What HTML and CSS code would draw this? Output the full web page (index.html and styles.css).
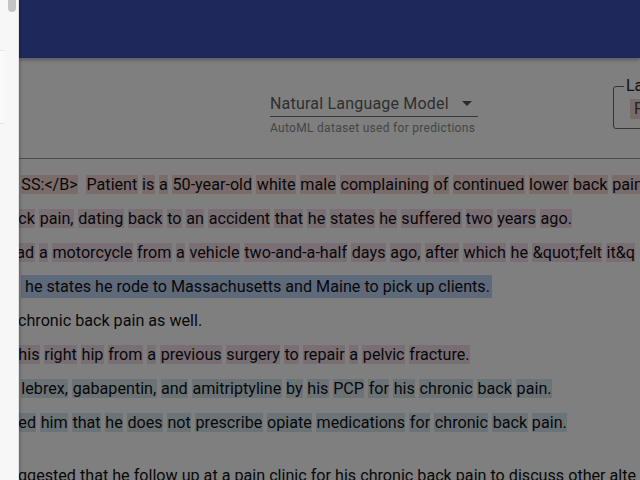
FILE: index.html
```html
<!DOCTYPE html>
<html>
<head>
<meta charset="utf-8">
<link rel="stylesheet" href="styles.css">
</head>
<body>
<div class="app">
  <aside class="rail">
    <div class="thumb"></div>
    <div class="rail-card"></div>
  </aside>
  <main class="main">
    <header class="topbar"></header>
    <section class="controls">
      <div class="select-field">
        <div class="select-row">
          <span class="select-value">Natural Language Model</span>
          <svg class="caret" width="10" height="5" viewBox="0 0 10 5"><path d="M0 0h10L5 5z" fill="currentColor"/></svg>
        </div>
        <div class="helper">AutoML dataset used for predictions</div>
      </div>
      <div class="legend-box">
        <span class="legend">La</span>
        <span class="chip">P</span>
      </div>
    </section>
    <section class="doc">
      <div class="line"><span class="w p">SS:&lt;/B&gt;</span>&nbsp; <span class="w p">Patient</span> <span class="w p">is</span> <span class="w p">a</span> <span class="w p">50-year-old</span> <span class="w p">white</span> <span class="w p">male</span> <span class="w p">complaining</span> <span class="w p">of</span> <span class="w p">continued</span> <span class="w p">lower</span> <span class="w p">back</span> <span class="w p">pain</span></div>
      <div class="line cut"><span class="w l">ck</span> <span class="w l">pain,</span> <span class="w l">dating</span> <span class="w l">back</span> <span class="w l">to</span> <span class="w l">an</span> <span class="w l">accident</span> <span class="w l">that</span> <span class="w l">he</span> <span class="w l">states</span> <span class="w l">he</span> <span class="w l">suffered</span> <span class="w l">two</span> <span class="w l">years</span> <span class="w l">ago.</span></div>
      <div class="line cut more"><span class="w l">ad</span> <span class="w l">a</span> <span class="w l">motorcycle</span> <span class="w l">from</span> <span class="w l">a</span> <span class="w l">vehicle</span> <span class="w l">two-and-a-half</span> <span class="w l">days</span> <span class="w l">ago,</span> <span class="w l">after</span> <span class="w l">which</span> <span class="w l">he</span> <span class="w l">&amp;quot;felt</span> <span class="w l">it&amp;q</span></div>
      <div class="line"><span class="block">&nbsp;he states he rode to Massachusetts and Maine to pick up clients.</span></div>
      <div class="line cut">chronic back pain as well.</div>
      <div class="line cut"><span class="w l">his</span> <span class="w l">right</span> <span class="w l">hip</span> <span class="w l">from</span> <span class="w l">a</span> <span class="w l">previous</span> <span class="w l">surgery</span> <span class="w l">to</span> <span class="w l">repair</span> <span class="w l">a</span> <span class="w l">pelvic</span> <span class="w l">fracture.</span></div>
      <div class="line"><span class="w b">lebrex,</span> <span class="w b">gabapentin,</span> <span class="w b">and</span> <span class="w b">amitriptyline</span> <span class="w b">by</span> <span class="w b">his</span> <span class="w b">PCP</span> <span class="w b">for</span> <span class="w b">his</span> <span class="w b">chronic</span> <span class="w b">back</span> <span class="w b">pain.</span></div>
      <div class="line cut"><span class="w b">ed</span> <span class="w b">him</span> <span class="w b">that</span> <span class="w b">he</span> <span class="w b">does</span> <span class="w b">not</span> <span class="w b">prescribe</span> <span class="w b">opiate</span> <span class="w b">medications</span> <span class="w b">for</span> <span class="w b">chronic</span> <span class="w b">back</span> <span class="w b">pain.</span></div>
      <div class="line gap cut">ggested that he follow up at a pain clinic for his chronic back pain to discuss other alte</div>
    </section>
    <div class="backdrop"></div>
  </main>
</div>
</body>
</html>
```

FILE: styles.css
```css
html, body {
  margin: 0;
  padding: 0;
  width: 640px;
  height: 480px;
  overflow: hidden;
  background: #fff;
}

.app {
  display: flex;
  height: 480px;
  font-family: "Roboto", "Liberation Sans", sans-serif;
}

.rail {
  position: relative;
  z-index: 3;
  width: 18px;
  flex: 0 0 18px;
  background: #f7f7f7;
  border-right: 1px solid #e2e2e2;
  box-shadow: 1px 0 3px rgba(0, 0, 0, 0.25);
}

.thumb {
  position: absolute;
  left: 8px;
  top: -6px;
  width: 8px;
  height: 18px;
  border-radius: 4px;
  background: #c4c4c4;
}

.rail-card {
  position: absolute;
  left: 0;
  top: 50px;
  width: 4px;
  height: 72px;
  border-top: 1px solid #e4e4e4;
  border-bottom: 1px solid #e4e4e4;
  background: #fafafa;
}

.main {
  position: relative;
  flex: 1;
  min-width: 0;
  overflow: hidden;
  display: flex;
  flex-direction: column;
}

.topbar {
  height: 58px;
  flex: 0 0 58px;
  background: #3f51b5;
  box-shadow: 0 2px 4px rgba(0, 0, 0, 0.3);
}

.controls {
  position: relative;
  height: 101px;
  flex: 0 0 101px;
  border-bottom: 1px solid #9a9a9a;
  box-sizing: border-box;
}

.select-field {
  position: absolute;
  left: 251px;
  top: 32px;
  width: 208px;
}

.select-row {
  display: flex;
  align-items: center;
  justify-content: space-between;
  height: 26px;
  border-bottom: 1px solid #6e6e6e;
  padding-right: 6px;
}

.select-value {
  font-size: 16px;
  letter-spacing: 0.2px;
  color: #5e5e5e;
}

.caret {
  color: #555;
}

.helper {
  margin-top: 4px;
  font-size: 12px;
  color: #8a8a8a;
  letter-spacing: 0.3px;
  white-space: nowrap;
}

.legend-box {
  position: absolute;
  left: 594px;
  top: 28px;
  width: 60px;
  height: 43px;
  box-sizing: border-box;
  border: 1px solid #6a6a6a;
  border-radius: 3px;
  padding: 12px 0 0 16px;
}

.legend {
  position: absolute;
  left: 10px;
  top: -10px;
  padding: 0 2px;
  background: #fff;
  font-size: 16px;
  line-height: 18px;
  color: #222;
}

.chip {
  display: inline-block;
  padding: 0 4px;
  line-height: 20px;
  background: #f2d4d4;
  color: #444;
  font-size: 16px;
}

.doc {
  padding-top: 16px;
  font-size: 16.15px;
  color: #111;
  white-space: nowrap;
}

.line {
  height: 34px;
  line-height: 20px;
  padding-left: 2px;
}

.line.cut {
  margin-left: -3px;
}

.line.more {
  margin-left: -5px;
}

.line.gap {
  margin-top: 19px;
}

.w {
  padding: 0 0.35px;
}

.w.p { background: #f6d8d8; }
.w.l { background: #f1dde8; }
.w.b { background: #d7e6ee; }

.block {
  background: #bcd2f4;
  padding: 2px 2px 2px 0;
}

.backdrop {
  position: absolute;
  inset: 0;
  background: rgba(0, 0, 0, 0.5);
  z-index: 2;
}
```
